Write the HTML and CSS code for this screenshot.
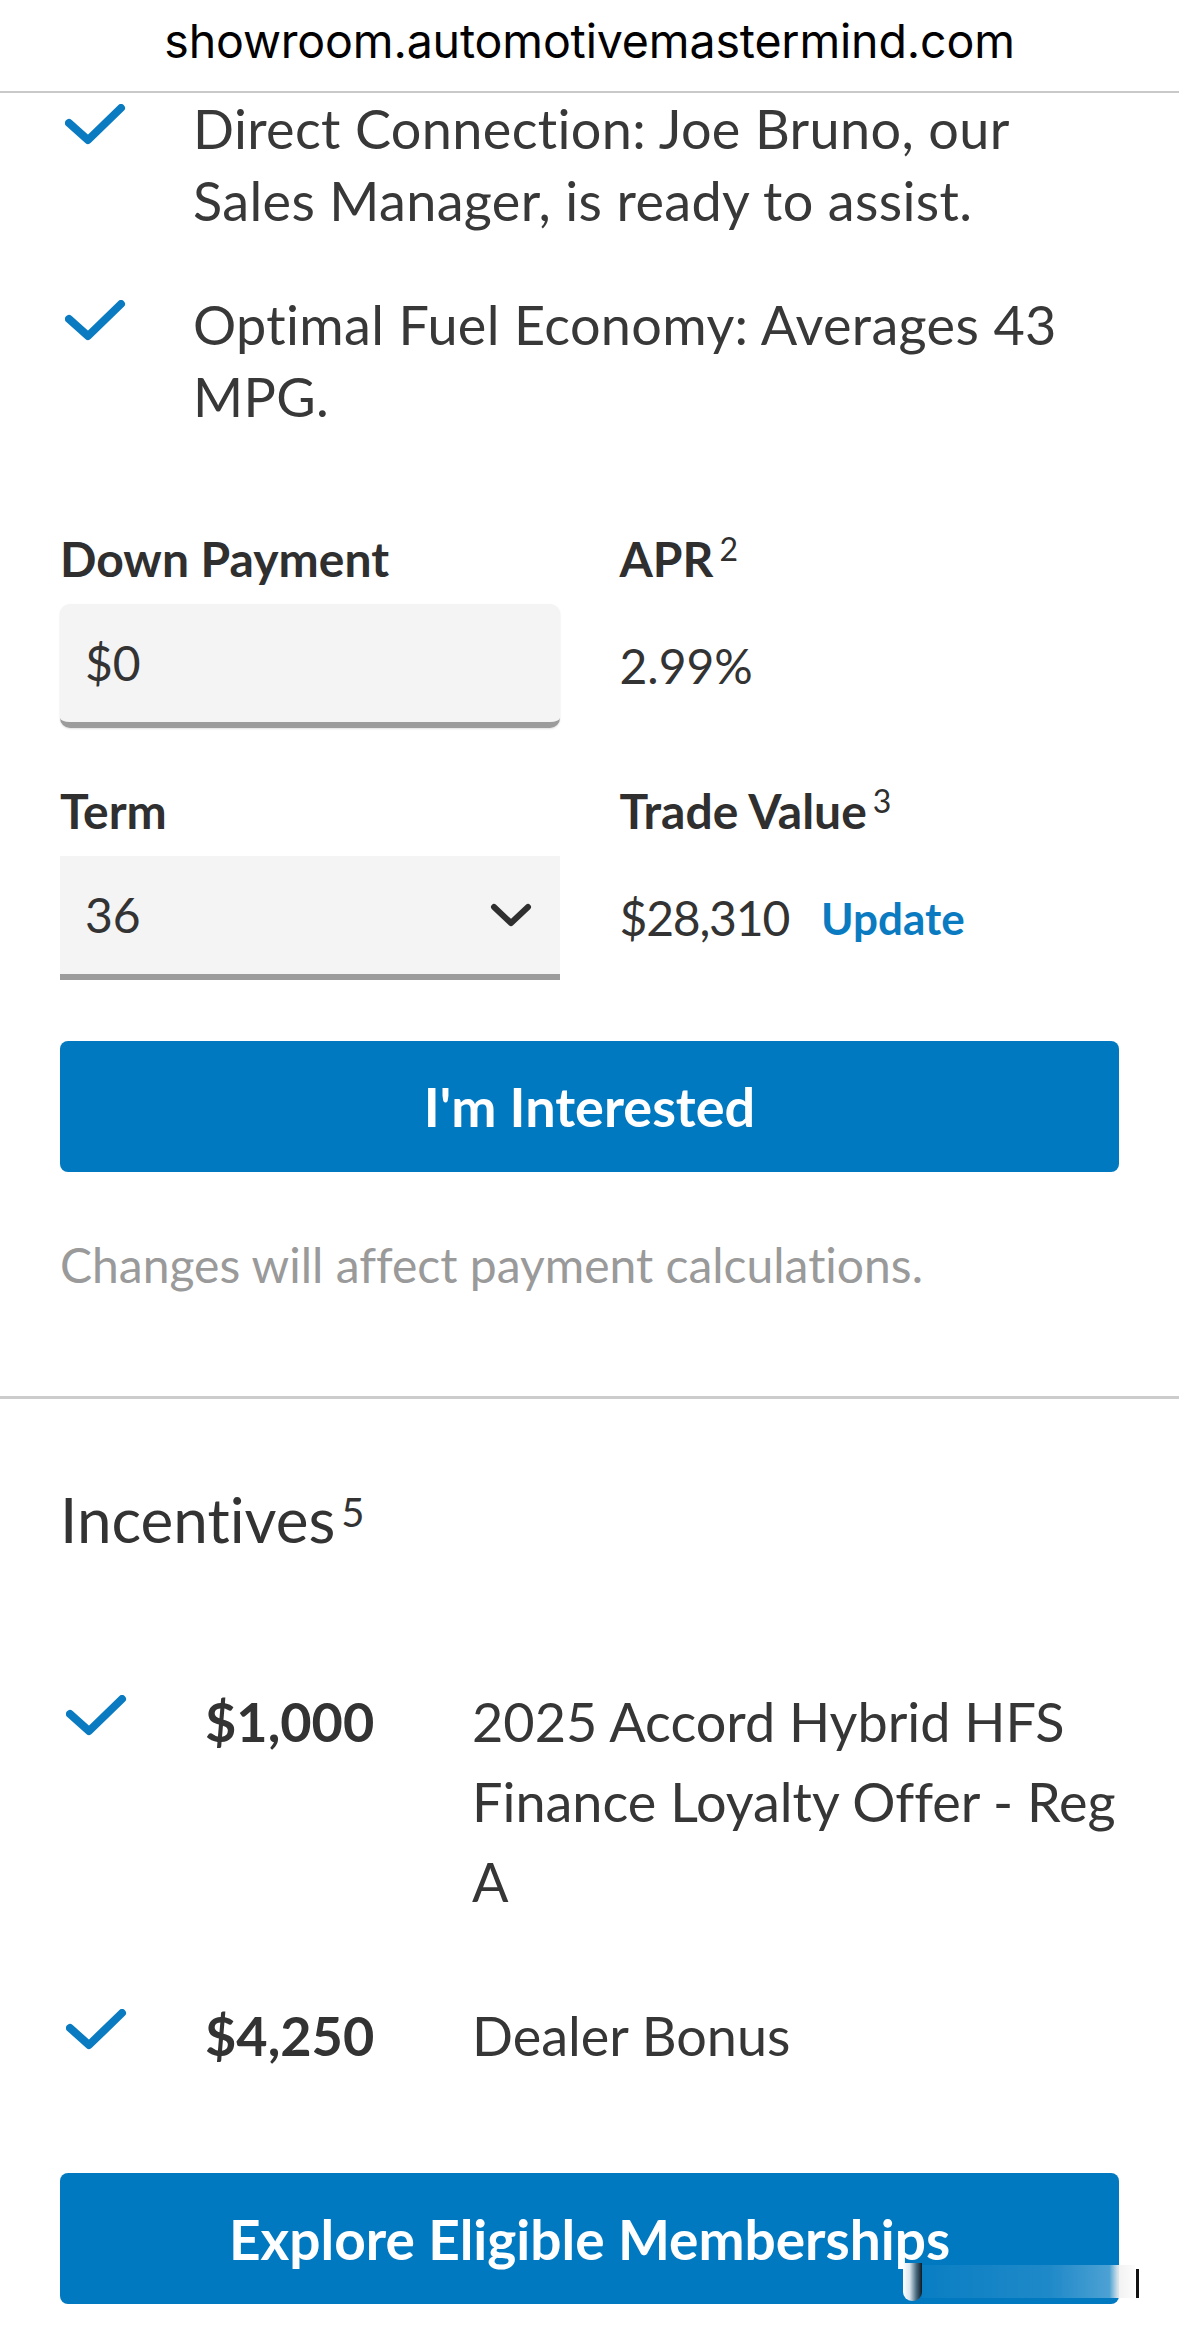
FILE: index.html
```html
<!DOCTYPE html>
<html lang="en">
<head>
<meta charset="utf-8">
<title>Showroom</title>
<link rel="stylesheet" href="styles.css">
</head>
<body>
<header class="urlbar"><span class="url">showroom.automotivemastermind.com</span></header>

<main class="page">
  <ul class="features">
    <li class="feature">
      <svg class="check" viewBox="0 0 61 41" aria-hidden="true"><polyline points="4,19 23,36 56,4"/></svg>
      <span class="feature-text">Direct Connection: Joe Bruno, our Sales Manager, is ready to assist.</span>
    </li>
    <li class="feature">
      <svg class="check" viewBox="0 0 61 41" aria-hidden="true"><polyline points="4,19 23,36 56,4"/></svg>
      <span class="feature-text">Optimal Fuel Economy: Averages 43 MPG.</span>
    </li>
  </ul>

  <section class="calc">
    <div class="field">
      <div class="label">Down Payment</div>
      <div class="input">$0</div>
    </div>
    <div class="field">
      <div class="label">APR<sup>2</sup></div>
      <div class="value">2.99%</div>
    </div>
    <div class="field">
      <div class="label">Term</div>
      <div class="select"><span>36</span>
        <svg class="chevron" viewBox="0 0 42 24" aria-hidden="true"><polyline points="4,4 21,20 38,4"/></svg>
      </div>
    </div>
    <div class="field">
      <div class="label">Trade Value<sup>3</sup></div>
      <div class="value"><span class="trade-amount">$28,310</span><a class="link">Update</a></div>
    </div>
  </section>

  <button class="btn btn-interest">I'm Interested</button>
  <p class="note">Changes will affect payment calculations.</p>
</main>

<hr class="divider">

<section class="incentives">
  <h2 class="inc-title">Incentives<sup>5</sup></h2>
  <div class="inc-list">
    <div class="inc-row">
      <svg class="check" viewBox="0 0 61 41" aria-hidden="true"><polyline points="4,19 23,36 56,4"/></svg>
      <span class="amount">$1,000</span>
      <span class="desc">2025 Accord Hybrid HFS Finance Loyalty Offer - Reg A</span>
    </div>
    <div class="inc-row">
      <svg class="check" viewBox="0 0 61 41" aria-hidden="true"><polyline points="4,19 23,36 56,4"/></svg>
      <span class="amount">$4,250</span>
      <span class="desc">Dealer Bonus</span>
    </div>
  </div>
  <button class="btn btn-explore">Explore Eligible Memberships</button>
</section>

<div class="glitch" aria-hidden="true">
  <span class="glitch-pill"></span>
  <span class="glitch-band"></span>
  <span class="glitch-bar"></span>
</div>
</body>
</html>
```

FILE: styles.css
```css
* { box-sizing: border-box; }

html, body {
  margin: 0;
  padding: 0;
  background: #ffffff;
}

body {
  width: 1179px;
  overflow: hidden;
  font-family: Lato, "Open Sans", Arial, sans-serif;
  font-variant-ligatures: none;
  font-size: 48px;
  line-height: 72px;
  color: #363636;
}

/* browser url bar */
.urlbar {
  height: 93px;
  border-bottom: 2px solid #c9c9c9;
  display: flex;
  justify-content: center;
  padding-top: 13px;
}
.url {
  font-family: Inter, Roboto, Arial, sans-serif;
  font-size: 46.5px;
  line-height: 56px;
  color: #000;
  letter-spacing: -0.15px;
}

.page {
  padding: 0 60px;
}

/* feature list */
.features {
  list-style: none;
  margin: 0;
  padding: 0;
}
.feature {
  display: flex;
  align-items: flex-start;
  margin-bottom: 52px;
}
.feature:last-child { margin-bottom: 0; }

.check {
  flex: none;
  width: 61px;
  height: 41px;
  margin: 11px 0 0 5px;
}
.check polyline {
  fill: none;
  stroke: #0b7bc1;
  stroke-width: 8;
  stroke-linecap: round;
  stroke-linejoin: round;
}
.feature-text {
  flex: 1;
  margin-left: 67px;
  font-size: 54px;
  line-height: 72px;
  letter-spacing: 0.35px;
  color: #383838;
}

/* calculator */
.calc {
  display: grid;
  grid-template-columns: 1fr 1fr;
  column-gap: 60px;
  row-gap: 47px;
  margin-top: 90px;
}
.label {
  font-weight: 700;
  color: #2f2f2f;
  line-height: 72px;
  margin-bottom: 9px;
}
sup {
  font-size: 32px;
  font-weight: 400;
  line-height: 0;
  vertical-align: 16px;
  margin-left: 6px;
}
.input,
.select {
  height: 124px;
  background: #f4f4f4;
  border-bottom: 6px solid #9c9c9c;
  padding: 0 28px 0 25px;
  display: flex;
  align-items: center;
  justify-content: space-between;
  color: #333;
}
.input {
  border-radius: 10px;
  box-shadow: 0 1px 2px rgba(0, 0, 0, 0.12);
}
.chevron {
  width: 42px;
  height: 24px;
}
.chevron polyline {
  fill: none;
  stroke: #2f2f2f;
  stroke-width: 6;
  stroke-linecap: round;
  stroke-linejoin: round;
}
.value {
  height: 124px;
  display: flex;
  align-items: center;
  color: #333;
}
.trade-amount {
  letter-spacing: -1.2px;
}
.link {
  color: #0b7bc1;
  font-weight: 700;
  font-size: 44px;
  margin-left: 32px;
}

/* buttons */
.btn {
  display: flex;
  justify-content: center;
  align-items: center;
  width: 100%;
  height: 131px;
  border: 0;
  border-radius: 8px;
  background: #0079c1;
  color: #ffffff;
  font-family: Lato, "Open Sans", Arial, sans-serif;
  font-variant-ligatures: none;
  font-size: 54px;
  font-weight: 700;
  padding: 0;
}
.btn-interest { margin-top: 61px; }

.note {
  color: #9a9a9a;
  margin: 57px 0 0;
  line-height: 72px;
}

.divider {
  border: 0;
  height: 3px;
  background: #cccccc;
  margin: 95px 0 0;
}

/* incentives */
.incentives {
  padding: 0 60px;
}
.inc-title {
  font-size: 62px;
  font-weight: 400;
  line-height: 72px;
  color: #333;
  margin: 84px 0 0;
}
.inc-title sup {
  font-size: 40px;
  margin-left: 6px;
}
.inc-list {
  margin-top: 127px;
  margin-right: -20px;
}
.inc-row {
  display: flex;
  align-items: flex-start;
  font-size: 54px;
  line-height: 80px;
  margin-bottom: 74px;
  color: #363636;
}
.inc-row:last-child { margin-bottom: 0; }
.inc-row .check {
  margin: 13px 0 0 6px;
}
.amount {
  flex: none;
  width: 267px;
  margin-left: 78px;
  font-weight: 700;
  color: #333;
}
.desc {
  flex: 1;
}
.btn-explore {
  margin-top: 97px;
  font-size: 55px;
}

/* screenshot artefact over the bottom button */
.glitch {
  position: absolute;
  left: 903px;
  top: 2263px;
  width: 237px;
  height: 38px;
}
.glitch-pill {
  position: absolute;
  left: 0;
  top: 0;
  width: 19px;
  height: 38px;
  border-radius: 0 0 9px 9px;
  background: linear-gradient(to right, #ffffff 0%, #d9e6ee 35%, #4a6b80 70%, #0b1a24 100%);
}
.glitch-band {
  position: absolute;
  left: 19px;
  top: 2px;
  width: 213px;
  height: 33px;
  background: linear-gradient(to right, rgba(255, 255, 255, 0.04) 0%, rgba(255, 255, 255, 0.12) 60%, rgba(255, 255, 255, 0.3) 88%, rgba(240, 240, 240, 0.9) 92%, rgba(250, 250, 250, 0.6) 100%);
}
.glitch-bar {
  position: absolute;
  left: 233px;
  top: 6px;
  width: 3px;
  height: 29px;
  background: #111;
}
```
